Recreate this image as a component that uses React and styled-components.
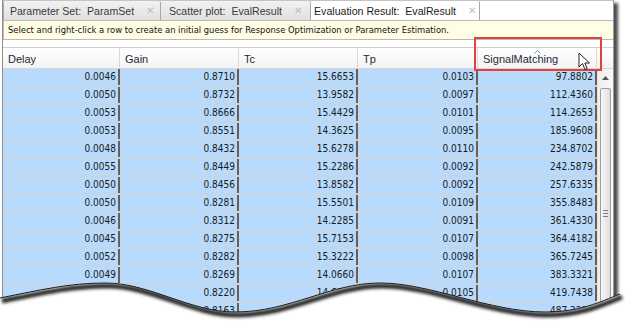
import React from 'react';
import styled, { createGlobalStyle } from 'styled-components';

const GlobalStyle = createGlobalStyle`
  html, body {
    margin: 0;
    padding: 0;
    background: #ffffff;
  }
  body {
    font-family: "Liberation Sans", Arial, sans-serif;
  }
`;

const Stage = styled.div`
  position: relative;
  width: 631px;
  height: 327px;
  overflow: hidden;
  background: #ffffff;
`;

const Window = styled.div`
  margin-left: 2px;
  width: 610px;
  height: 327px;
  overflow: hidden;
  background: #ffffff;
  border-left: 1px solid #8e8e8e;
  border-right: 1px solid #9c9c9c;
  box-shadow: 4px 3px 3px rgba(0, 0, 0, 0.7);
`;

const TabBar = styled.div`
  display: flex;
  align-items: flex-end;
  height: 20px;
  border-top: 1px solid #c4c4c4;
  box-sizing: border-box;
  background: #f7f7f7;
`;

const Tab = styled.div`
  flex-shrink: 0;
  width: ${(p) => p.$w}px;
  height: 19px;
  box-sizing: border-box;
  display: flex;
  align-items: center;
  justify-content: center;
  gap: 12px;
  padding-top: 1px;
  font-family: "Liberation Sans", Arial, sans-serif;
  font-size: 10.6px;
  white-space: pre;
  border-right: 1px solid #a9a9a9;
  border-left: ${(p) => (p.$first ? '1px solid #a9a9a9' : 'none')};
  border-radius: 2px 2px 0 0;
  background: ${(p) =>
    p.$active ? '#ffffff' : 'linear-gradient(#f2f2f2, #e0e0e0)'};
  color: ${(p) => (p.$active ? '#1c1c1c' : '#3a3a3a')};
`;

const Close = styled.span`
  font-size: 10px;
  color: #bcbcbc;
  line-height: 1;
`;

const TabFill = styled.div`
  flex: 1;
  height: 19px;
  background: #ffffff;
`;

const InfoBar = styled.div`
  height: 20px;
  box-sizing: border-box;
  display: flex;
  align-items: center;
  padding-left: 4px;
  background: #fffde3;
  border: 1px solid #b9b9b9;
  border-right: none;
  font-family: "DejaVu Sans", Verdana, sans-serif;
  font-size: 8.4px;
  color: #111111;
  white-space: nowrap;
`;

const Table = styled.div`
  margin-top: 7px;
`;

const HeaderRow = styled.div`
  display: flex;
  height: 22px;
  box-sizing: border-box;
  border-top: 1px solid #cfcfcf;
  border-bottom: 1px solid #d6d6d6;
  background: linear-gradient(#ffffff, #f4f4f4);
`;

const HeaderCell = styled.div`
  position: relative;
  width: ${(p) => p.$w}px;
  box-sizing: border-box;
  padding: 5px 0 0 5px;
  border-right: 1px solid #dadada;
  font-family: "Liberation Sans", Arial, sans-serif;
  font-size: 11px;
  color: #1e2a36;
`;

const SortMark = styled.svg`
  position: absolute;
  top: 2px;
  left: 50%;
  margin-left: -3px;
`;

const Corner = styled.div`
  flex: 1;
`;

const Body = styled.div`
  display: flex;
`;

const Rows = styled.div`
  display: flex;
  flex-direction: column;
`;

const Row = styled.div`
  display: flex;
  flex-shrink: 0;
  height: 18px;
  box-sizing: border-box;
  border-bottom: 2px solid #c8d4e0;
  background: #b8dafc;
`;

const Cell = styled.div`
  width: ${(p) => p.$w}px;
  box-sizing: border-box;
  padding-right: 2px;
  text-align: right;
  line-height: 16px;
  border-right: 2px solid #6f5e4c;
  font-family: "Liberation Sans Narrow", "DejaVu Sans Condensed", "Liberation Sans", sans-serif;
  font-size: 10px;
  color: #1a1a1a;
`;

const ScrollBar = styled.div`
  flex: 1;
  display: flex;
  flex-direction: column;
  align-items: center;
  background: linear-gradient(90deg, #eeeeee, #f8f8f8);
  border-left: 1px solid #e2e2e2;
`;

const ArrowButton = styled.div`
  height: 17px;
  display: flex;
  align-items: center;
  justify-content: center;
`;

const Thumb = styled.div`
  flex-shrink: 0;
  margin-top: 2px;
  width: 11px;
  height: 250px;
  box-sizing: border-box;
  border: 1px solid #9d9d9d;
  border-radius: 2px;
  background: linear-gradient(90deg, #f7f7f7, #dedede);
  display: flex;
  align-items: center;
  justify-content: center;
`;

const Grip = styled.div`
  width: 5px;
  height: 5px;
  border-top: 1px solid #808080;
  border-bottom: 1px solid #808080;
  background: linear-gradient(transparent 2px, #808080 2px, #808080 3px, transparent 3px);
`;

const Highlight = styled.div`
  position: absolute;
  left: 474px;
  top: 37px;
  width: 128px;
  height: 34px;
  box-sizing: border-box;
  border: 2px solid #e2413e;
`;

const Cursor = styled.svg`
  position: absolute;
  left: 578px;
  top: 52px;
`;

const TornEdge = styled.svg`
  position: absolute;
  left: 0;
  top: 0;
  pointer-events: none;
`;

const columns = [
  { name: 'Delay', w: 117 },
  { name: 'Gain', w: 119 },
  { name: 'Tc', w: 119 },
  { name: 'Tp', w: 120 },
  { name: 'SignalMatching', w: 119, sorted: true },
];

const data = [
  ['0.0046', '0.8710', '15.6653', '0.0103', '97.8802'],
  ['0.0050', '0.8732', '13.9582', '0.0097', '112.4360'],
  ['0.0053', '0.8666', '15.4429', '0.0101', '114.2653'],
  ['0.0053', '0.8551', '14.3625', '0.0095', '185.9608'],
  ['0.0048', '0.8432', '15.6278', '0.0110', '234.8702'],
  ['0.0055', '0.8449', '15.2286', '0.0092', '242.5879'],
  ['0.0050', '0.8456', '13.8582', '0.0092', '257.6335'],
  ['0.0050', '0.8281', '15.5501', '0.0109', '355.8483'],
  ['0.0046', '0.8312', '14.2285', '0.0091', '361.4330'],
  ['0.0045', '0.8275', '15.7153', '0.0107', '364.4182'],
  ['0.0052', '0.8282', '15.3222', '0.0098', '365.7245'],
  ['0.0049', '0.8269', '14.0660', '0.0107', '383.3321'],
  ['0.0051', '0.8220', '14.6911', '0.0105', '419.7438'],
  ['0.0047', '0.8163', '15.1840', '0.0099', '487.2216'],
];

const tabs = [
  { label: 'Parameter Set:  ParamSet', w: 158 },
  { label: 'Scatter plot:  EvalResult', w: 150 },
  { label: 'Evaluation Result:  EvalResult', w: 169, active: true },
];

const wave =
  'M0,298 C40,290 70,283 105,283 C150,283 190,312 235,312 C290,312 330,283 380,283 C430,283 490,312 545,312 C580,312 600,302 620,294';

function App() {
  return (
    <Stage>
      <GlobalStyle />
      <Window>
        <TabBar>
          {tabs.map((t, i) => (
            <Tab key={t.label} $w={t.w} $active={t.active} $first={i === 0}>
              <span>{t.label}</span>
              <Close>✕</Close>
            </Tab>
          ))}
          <TabFill />
        </TabBar>
        <InfoBar>
          Select and right-click a row to create an initial guess for Response Optimization or Parameter Estimation.
        </InfoBar>
        <Table>
          <HeaderRow>
            {columns.map((c) => (
              <HeaderCell key={c.name} $w={c.w}>
                {c.sorted && (
                  <SortMark width="7" height="4" viewBox="0 0 7 4">
                    <path d="M0.5,3.5 L3.5,0.5 L6.5,3.5" fill="none" stroke="#6d9ccc" strokeWidth="1" />
                  </SortMark>
                )}
                {c.name}
              </HeaderCell>
            ))}
            <Corner />
          </HeaderRow>
          <Body>
            <Rows>
              {data.map((r, i) => (
                <Row key={i}>
                  {r.map((v, j) => (
                    <Cell key={j} $w={columns[j].w}>
                      {v}
                    </Cell>
                  ))}
                </Row>
              ))}
            </Rows>
            <ScrollBar>
              <ArrowButton>
                <svg width="7" height="4" viewBox="0 0 7 4">
                  <path d="M0,4 L3.5,0 L7,4 Z" fill="#555" />
                </svg>
              </ArrowButton>
              <Thumb>
                <Grip />
              </Thumb>
            </ScrollBar>
          </Body>
        </Table>
      </Window>

      <Highlight />
      <Cursor width="13" height="19" viewBox="0 0 13 19">
        <path
          d="M1,1 L1,15 L4.5,11.5 L7,17.5 L9.2,16.6 L6.8,11 L11.5,11 Z"
          fill="#ffffff"
          stroke="#222222"
          strokeWidth="1"
          strokeLinejoin="round"
        />
      </Cursor>

      <TornEdge width="631" height="327" viewBox="0 0 631 327">
        <defs>
          <clipPath id="below">
            <path d={`${wave} L631,294 L631,327 L0,327 Z`} />
          </clipPath>
          <filter id="soft" x="-5%" y="-50%" width="110%" height="200%">
            <feGaussianBlur stdDeviation="1.6" />
          </filter>
        </defs>
        <path d={`${wave} L631,294 L631,327 L0,327 Z`} fill="#ffffff" />
        <g clipPath="url(#below)">
          <path
            d={wave}
            transform="translate(2,3)"
            fill="none"
            stroke="#2b2b2b"
            strokeWidth="5"
            filter="url(#soft)"
          />
        </g>
        <path d={wave} fill="none" stroke="#1a1a1a" strokeWidth="1" />
      </TornEdge>
    </Stage>
  );
}

export default App;
